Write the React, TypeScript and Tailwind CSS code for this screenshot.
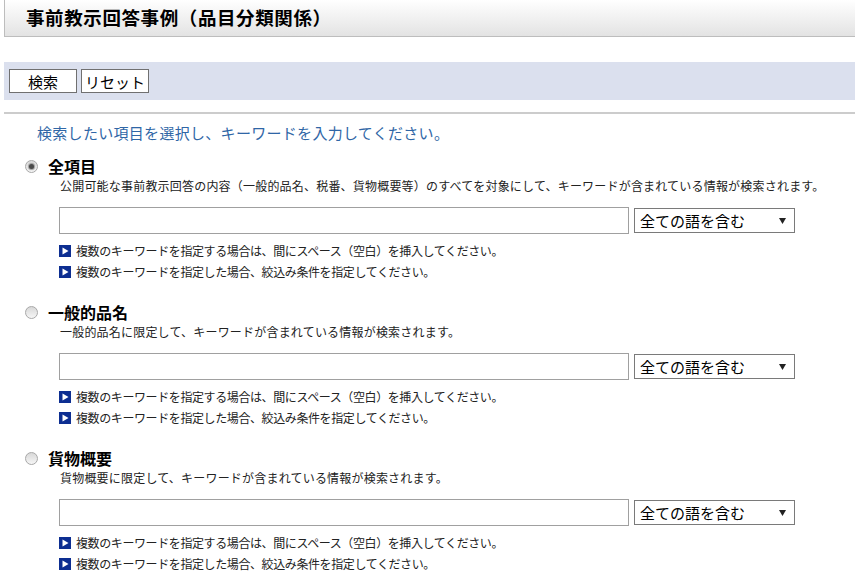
import React from 'react';

const FONT = "font-['Noto_Sans_CJK_JP','Noto_Sans_CJK_SC',sans-serif]";

const notes = [
  '複数のキーワードを指定する場合は、間にスペース（空白）を挿入してください。',
  '複数のキーワードを指定した場合、絞込み条件を指定してください。',
];

const sections = [
  {
    label: '全項目',
    desc: '公開可能な事前教示回答の内容（一般的品名、税番、貨物概要等）のすべてを対象にして、キーワードが含まれている情報が検索されます。',
    checked: true,
  },
  {
    label: '一般的品名',
    desc: '一般的品名に限定して、キーワードが含まれている情報が検索されます。',
    checked: false,
  },
  {
    label: '貨物概要',
    desc: '貨物概要に限定して、キーワードが含まれている情報が検索されます。',
    checked: false,
  },
];

const Radio: React.FC<{ checked: boolean }> = ({ checked }) => (
  <span className="w-[13px] h-[13px] rounded-full border border-[#a8a8a8] bg-gradient-to-b from-[#d8d8d8] to-[#f6f6f6] flex items-center justify-center shrink-0">
    {checked && <span className="w-[5px] h-[5px] rounded-full bg-[#4a4a4a] shadow-[0_0_1px_1px_#9a9a9a]" />}
  </span>
);

const NoteIcon = () => (
  <svg width="12" height="12" viewBox="0 0 12 12" className="shrink-0">
    <rect width="12" height="12" fill="#0d2e91" />
    <path d="M3.5 2.5 L9.5 6 L3.5 9.5 Z" fill="#ffffff" />
  </svg>
);

const Section: React.FC<{ label: string; desc: string; checked: boolean }> = ({ label, desc, checked }) => (
  <div className="flex flex-col">
    <div className="h-[20px] flex items-center pl-[25px]">
      <Radio checked={checked} />
      <span className="ml-[10px] text-[16px] font-bold text-black leading-[20px]">{label}</span>
    </div>
    <div className="pl-[60px] text-[12px] tracking-[0.2px] leading-[20px] text-[#222] whitespace-nowrap">{desc}</div>
    <div className="mt-[11px] pl-[59px] flex items-center">
      <input
        type="text"
        className="w-[570px] h-[27px] border border-[#a0a0a0] bg-white outline-none"
      />
      <div className="ml-[5px] w-[161px] h-[25px] border border-[#7a7a7a] bg-white flex items-center justify-between pl-[5px] pr-[8px]">
        <span className="text-[15px] leading-[20px] text-black">全ての語を含む</span>
        <svg width="7" height="6" viewBox="0 0 7 6">
          <path d="M0 0 H7 L3.5 6 Z" fill="#222" />
        </svg>
      </div>
    </div>
    <div className="mt-[6px] flex flex-col">
      {notes.map((n) => (
        <div key={n} className="h-[21px] pl-[59px] flex items-center gap-[5px]">
          <NoteIcon />
          <span className="text-[12px] tracking-[-0.4px] text-[#222] whitespace-nowrap">{n}</span>
        </div>
      ))}
    </div>
  </div>
);

export default function App() {
  return (
    <div className={`${FONT} w-[855px] h-[579px] overflow-hidden bg-white`}>
      <div className="ml-[4px] h-[37px] border-l border-b border-[#bdbdbd] bg-gradient-to-b from-white to-[#e3e3e3] flex items-center pl-[21px]">
        <h1 className="text-[18.5px] tracking-[0.6px] font-bold text-black whitespace-nowrap">事前教示回答事例（品目分類関係）</h1>
      </div>
      <div className="mt-[25px] ml-[4px] h-[38px] bg-[#dbe0ee] flex items-center pl-[5px] gap-[4px]">
        <button className="w-[68px] h-[24px] border border-[#707070] bg-white text-[15px] leading-none text-black">検索</button>
        <button className="w-[68px] h-[24px] border border-[#707070] bg-white text-[15px] leading-none text-black">リセット</button>
      </div>
      <div className="mt-[12px] ml-[4px] h-[2px] bg-[#cccccc]" />
      <div className="mt-[9px] pl-[37px] text-[15px] tracking-[0.3px] leading-[20px] text-[#2f66a6] whitespace-nowrap">
        検索したい項目を選択し、キーワードを入力してください。
      </div>
      <div className="mt-[13px] flex flex-col gap-[20px]">
        {sections.map((s) => (
          <Section key={s.label} {...s} />
        ))}
      </div>
    </div>
  );
}
